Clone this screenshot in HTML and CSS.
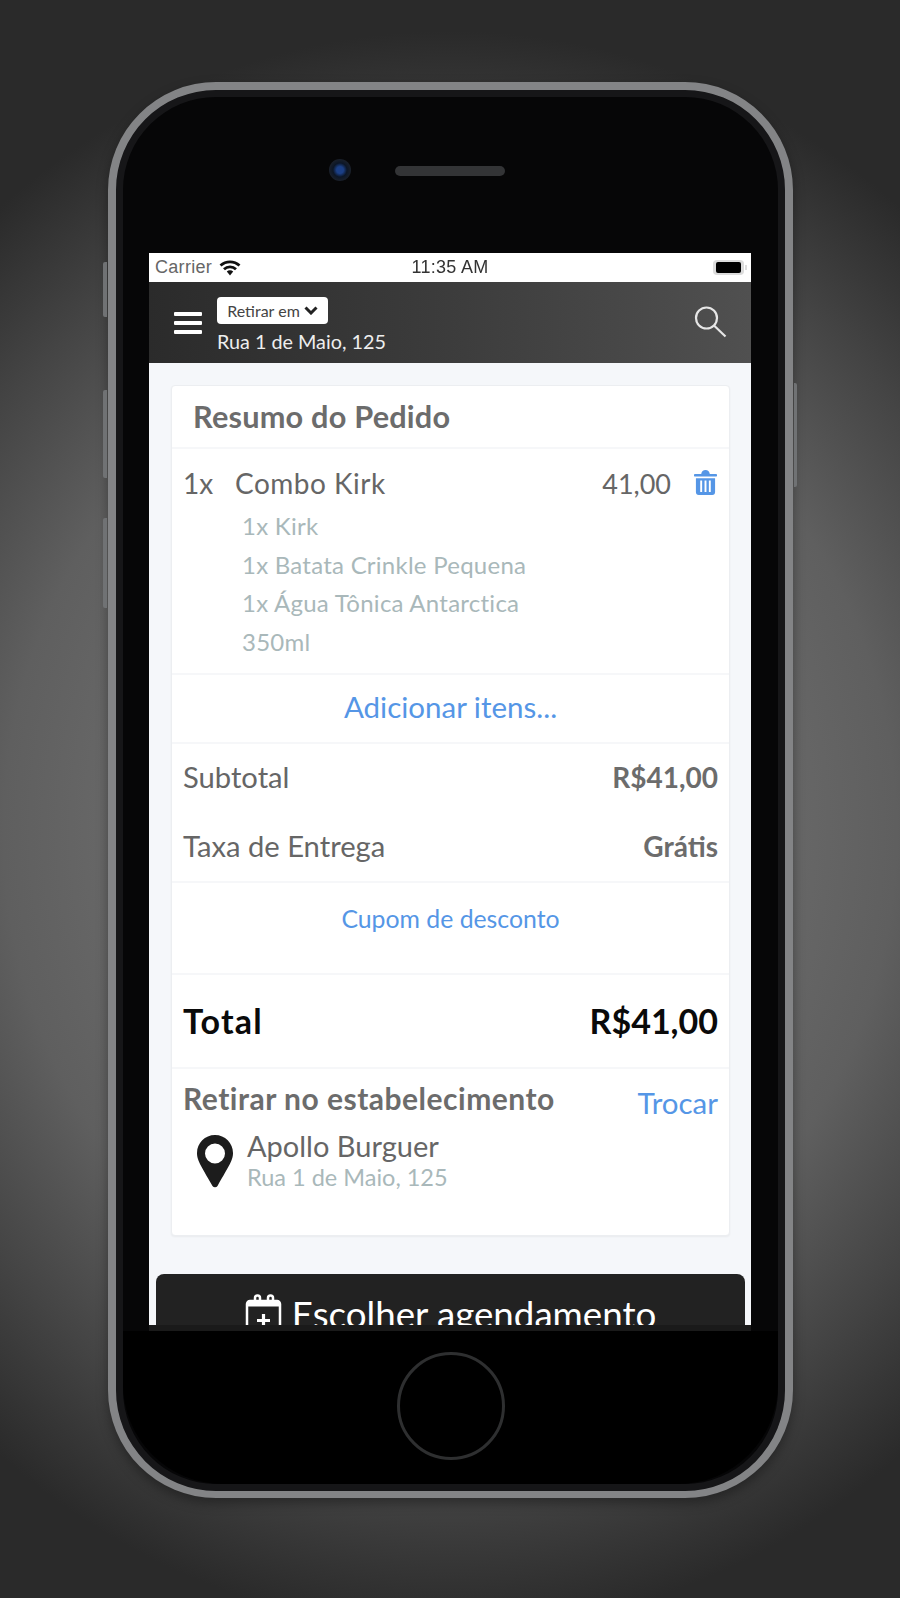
FILE: index.html
```html
<!DOCTYPE html>
<html lang="pt-BR">
<head>
    <meta charset="UTF-8">
    <meta name="viewport" content="width=device-width, initial-scale=1.0">
    <title>Resumo do Pedido</title>
    <link rel="stylesheet" href="styles.css">
</head>
<body>
    <div class="phone">
        <span class="side-btn side-mute"></span>
        <span class="side-btn side-up"></span>
        <span class="side-btn side-down"></span>
        <span class="side-btn side-power"></span>

        <div class="bezel-top">
            <span class="camera"></span>
            <span class="speaker"></span>
        </div>

        <div class="screen">
            <div class="status-bar">
                <div class="status-left">
                    <span>Carrier</span>
                    <svg class="wifi" viewBox="0 0 22 16"><path class="wifi-arc" d="M1.500 5.500a14 14 0 0 1 19 0M5 9.200a8.800 8.800 0 0 1 12 0" /><path d="M7.800 11.600a4.500 4.500 0 0 1 6.400 0L11 15.500z" /></svg>
                </div>
                <span class="status-time">11:35 AM</span>
                <div class="battery"><span></span></div>
            </div>

            <header class="app-header">
                <div class="burger"><span></span><span></span><span></span></div>
                <div class="place">
                    <div class="pill">Retirar em
                        <svg class="chevron" viewBox="0 0 14 9"><path d="M1.500 1.500 7 7l5.500-5.500" /></svg>
                    </div>
                    <div class="place-address">Rua 1 de Maio, 125</div>
                </div>
                <svg class="search" viewBox="0 0 32 32"><circle cx="12" cy="12" r="10.500" /><path d="M19.500 19.500 31 30.500" /></svg>
            </header>

            <main class="content">
                <section class="card">
                    <h2 class="card-title">Resumo do Pedido</h2>

                    <div class="order-item">
                        <div class="item-main">
                            <span class="item-qty">1x</span>
                            <span class="item-name">Combo Kirk</span>
                            <span class="item-price">41,00</span>
                            <svg class="trash" viewBox="0 0 24 26"><path d="M1 4h6.500c.5-2.500 2-4 4.500-4s4 1.500 4.500 4H23a1 1 0 0 1 1 1v1a.7.7 0 0 1-.7.7H.7A.7.7 0 0 1 0 6V5a1 1 0 0 1 1-1z" /><path fill-rule="evenodd" d="M2 8.500h20V23a3 3 0 0 1-3 3H5a3 3 0 0 1-3-3zM6.500 11v12h2V11zM11 11v12h2V11zM15.500 11v12h2V11z" /></svg>
                        </div>
                        <ul class="item-parts">
                            <li>1x Kirk</li>
                            <li>1x Batata Crinkle Pequena</li>
                            <li>1x Água Tônica Antarctica</li>
                            <li>350ml</li>
                        </ul>
                    </div>

                    <a class="add-items">Adicionar itens...</a>

                    <div class="totals">
                        <div class="total-line"><span>Subtotal</span><strong>R$41,00</strong></div>
                        <div class="total-line"><span>Taxa de Entrega</span><strong>Grátis</strong></div>
                    </div>

                    <a class="coupon">Cupom de desconto</a>

                    <div class="grand-total"><span class="grand-label">Total</span><span>R$41,00</span></div>

                    <div class="pickup">
                        <div class="pickup-head">
                            <h3>Retirar no estabelecimento</h3>
                            <a>Trocar</a>
                        </div>
                        <div class="pickup-place">
                            <svg class="pin" viewBox="0 0 36 53"><path fill-rule="evenodd" d="M18 0C8 0 0 8 0 18c0 7 3 11 15.500 33a3 3 0 0 0 5 0C33 29 36 25 36 18 36 8 28 0 18 0zm0 8.500a10 10 0 1 1 0 20 10 10 0 0 1 0-20z" /></svg>
                            <div>
                                <div class="pickup-name">Apollo Burguer</div>
                                <div class="pickup-address">Rua 1 de Maio, 125</div>
                            </div>
                        </div>
                    </div>
                </section>

                <button class="schedule-btn">
                    <svg class="calendar" viewBox="0 0 37 40"><path d="M2 40V10a3 3 0 0 1 3-3h27a3 3 0 0 1 3 3v30" /><path class="calendar-band" d="M3 8h31v4.500H3z" /><path d="M10 8V4a2.500 2.500 0 0 1 5 0v4M23 8V4a2.500 2.500 0 0 1 5 0v4" /><path class="calendar-plus" d="M18.500 20v13M12 26.500h13" /></svg>
                    Escolher agendamento
                </button>
            </main>
        </div>
        <div class="screen-foot"></div>

        <div class="bezel-bottom">
            <span class="home-btn"></span>
        </div>
    </div>
</body>
</html>
```

FILE: styles.css
```css
* {
    box-sizing: border-box;
}
body {
    margin: 0;
    height: 1598px;
    overflow: hidden;
    padding: 82px 0 0 108px;
    font-family: "Lato", "Noto Sans", sans-serif;
    background: radial-gradient(ellipse 720px 800px at 50% 52%, #808080 0%, #5f5f5f 62%, #444 82%, #2a2a2a 100%);
    background-color: #2a2a2a;
}

/* telefone */
.phone {
    position: relative;
    width: 685px;
    height: 1416px;
    border: 8px solid #838486;
    border-bottom-width: 7px;
    border-radius: 108px;
    background: #060607;
    box-shadow: inset 0 0 0 7px #161618, 0 5px 12px rgba(0, 0, 0, .35);
    display: flex;
    flex-direction: column;
    filter: blur(.5px);
}
.side-btn {
    position: absolute;
    width: 4px;
    left: -13px;
    background: #707274;
    border-radius: 2px 0 0 2px;
}
.side-mute { top: 172px; height: 55px; }
.side-up { top: 300px; height: 88px; }
.side-down { top: 428px; height: 90px; }
.side-power {
    left: auto;
    right: -12px;
    width: 3px;
    top: 293px;
    height: 104px;
    border-radius: 0 2px 2px 0;
}
.bezel-top {
    height: 163px;
    padding: 69px 0 0 213px;
    display: flex;
    align-items: flex-start;
    gap: 44px;
}
.camera {
    width: 22px;
    height: 22px;
    border-radius: 50%;
    background: radial-gradient(circle, #1b3f86 0 22%, #0c1626 45%, #2b2c30 100%);
}
.speaker {
    margin-top: 7px;
    width: 110px;
    height: 10px;
    border-radius: 5px;
    background: #333436;
}
.bezel-bottom {
    flex: 1;
    padding-top: 21px;
    display: flex;
    justify-content: center;
    border-radius: 0 0 100px 100px;
    background: #000;
    margin: 0 7px 7px;
}
.home-btn {
    width: 108px;
    height: 108px;
    border-radius: 50%;
    border: 3px solid #2e2f30;
}

/* tela */
.screen {
    width: 602px;
    height: 1072px;
    margin-left: 33px;
    overflow: hidden;
    background: #f5f7fa;
    flex: none;
}
.screen-foot {
    width: 602px;
    height: 6px;
    margin-left: 33px;
    background: #1a1a1a;
    flex: none;
}
.status-bar {
    height: 29px;
    background: #fff;
    padding: 0 7px 0 6px;
    display: flex;
    align-items: center;
    justify-content: space-between;
    position: relative;
    font-family: "Liberation Sans", sans-serif;
    font-size: 18px;
    letter-spacing: .3px;
    color: #666;
}
.status-left {
    display: flex;
    align-items: center;
    gap: 7px;
}
.wifi {
    width: 22px;
    height: 16px;
    fill: #111;
}
.wifi-arc {
    fill: none;
    stroke: #111;
    stroke-width: 2.800;
}
.status-time {
    position: absolute;
    left: 0;
    right: 0;
    text-align: center;
    color: #333;
    pointer-events: none;
}
.battery {
    position: relative;
    width: 31px;
    height: 15px;
    padding: 2px 3px;
    border-radius: 4px;
    background: #dcdcdc;
}
.battery::after {
    content: "";
    position: absolute;
    right: -3px;
    top: 5px;
    width: 2px;
    height: 5px;
    background: #ddd;
}
.battery span {
    display: block;
    height: 100%;
    border-radius: 2px;
    background: #000;
}
.app-header {
    height: 81px;
    padding: 0 24px 0 25px;
    display: flex;
    align-items: center;
    background: linear-gradient(90deg, #2b2b2b 0%, #3c3c3c 50%, #505050 100%);
    color: #fff;
}
.burger {
    width: 28px;
    display: flex;
    flex-direction: column;
    gap: 5px;
}
.burger span {
    height: 4px;
    border-radius: 1px;
    background: #fff;
}
.place {
    margin-left: 15px;
    flex: 1;
    padding-top: 5px;
}
.pill {
    width: 111px;
    height: 27px;
    border-radius: 4px;
    background: #fff;
    color: #444;
    font-size: 16px;
    display: flex;
    align-items: center;
    justify-content: center;
    gap: 4px;
}
.chevron {
    width: 14px;
    height: 9px;
    fill: none;
    stroke: #222;
    stroke-width: 3;
}
.place-address {
    margin-top: 5px;
    font-size: 19.800px;
    color: #eee;
}
.search {
    width: 33px;
    height: 32px;
    margin-top: -1px;
    fill: none;
    stroke: #e6e6e6;
    stroke-width: 2.200;
}

/* conteudo */
.content {
    padding: 22px 6px 0 7px;
}
.card {
    margin: 0 15px 38px 15px;
    height: 851px;
    background: #fff;
    border: 1px solid #eceef1;
    border-radius: 4px;
    box-shadow: 0 1px 2px rgba(0, 0, 0, .05);
    color: #666;
}
.card-title {
    margin: 0;
    height: 63px;
    padding: 0 0 1px 21px;
    display: flex;
    align-items: center;
    font-size: 30.700px;
    letter-spacing: .2px;
    font-weight: 700;
    color: #6c6c6c;
    border-bottom: 2px solid #f6f7f9;
}
.order-item {
    height: 226px;
    padding: 14px 12px 0 11px;
    border-bottom: 2px solid #f6f7f9;
}
.item-main {
    display: flex;
    align-items: center;
    height: 40px;
    font-size: 28px;
}
.item-qty {
    width: 52px;
}
.item-name {
    flex: 1;
    letter-spacing: .5px;
}
.item-price {
    margin-right: 23px;
    font-size: 27px;
}
.trash {
    width: 23px;
    height: 25px;
    fill: #5596e6;
    margin-top: -1px;
}
.item-parts {
    list-style: none;
    margin: 4px 0 0 59px;
    padding: 0;
    font-size: 24px;
    letter-spacing: .25px;
    line-height: 38.700px;
    color: #a9b8ba;
}
.add-items,
.coupon {
    display: flex;
    align-items: center;
    justify-content: center;
    color: #5596e6;
    border-bottom: 2px solid #f6f7f9;
}
.add-items {
    height: 69px;
    padding-bottom: 4px;
    font-size: 29.500px;
}
.coupon {
    height: 92px;
    font-size: 24.800px;
    align-items: flex-start;
    padding-top: 21px;
}
.totals {
    height: 139px;
    padding: 0 11px;
    border-bottom: 2px solid #f6f7f9;
}
.total-line {
    height: 69px;
    padding-bottom: 4px;
    display: flex;
    align-items: center;
    justify-content: space-between;
    font-size: 29.200px;
}
.total-line strong {
    font-size: 28px;
    font-weight: 700;
    color: #6c6c6c;
}
.grand-total {
    height: 94px;
    padding: 0 11px 2px;
    display: flex;
    align-items: center;
    justify-content: space-between;
    font-size: 34px;
    font-weight: 700;
    color: #0a0a0a;
    border-bottom: 2px solid #f6f7f9;
}
.grand-label {
    letter-spacing: 1.200px;
}
.pickup {
    padding: 11px 11px 0 11px;
}
.pickup-head {
    display: flex;
    justify-content: space-between;
}
.pickup-head h3 {
    margin: 0;
    font-size: 30px;
    letter-spacing: .5px;
    font-weight: 700;
    color: #6c6c6c;
}
.pickup-head a {
    margin-top: 5px;
    font-size: 29.500px;
    color: #5596e6;
}
.pickup-place {
    margin-top: 8px;
    padding-left: 14px;
    display: flex;
    gap: 14px;
}
.pin {
    width: 36px;
    height: 53px;
    fill: #1c1c1c;
    margin-top: 7px;
}
.pickup-name {
    font-size: 29px;
    line-height: 36px;
}
.pickup-address {
    font-size: 23.500px;
    line-height: 27px;
    color: #a9b8ba;
}
.schedule-btn {
    width: 100%;
    height: 90px;
    padding: 18px 0 0;
    display: flex;
    align-items: flex-start;
    justify-content: center;
    gap: 10px;
    border: 0;
    border-radius: 8px;
    background: #222;
    color: #fff;
    font-family: inherit;
    font-size: 36.700px;
}
.calendar {
    width: 37px;
    height: 40px;
    margin-top: 2px;
    fill: none;
    stroke: #fff;
    stroke-width: 2.500;
}
.calendar-band {
    fill: #fff;
    stroke: none;
}
.calendar-plus {
    stroke-width: 3.200;
}
```
